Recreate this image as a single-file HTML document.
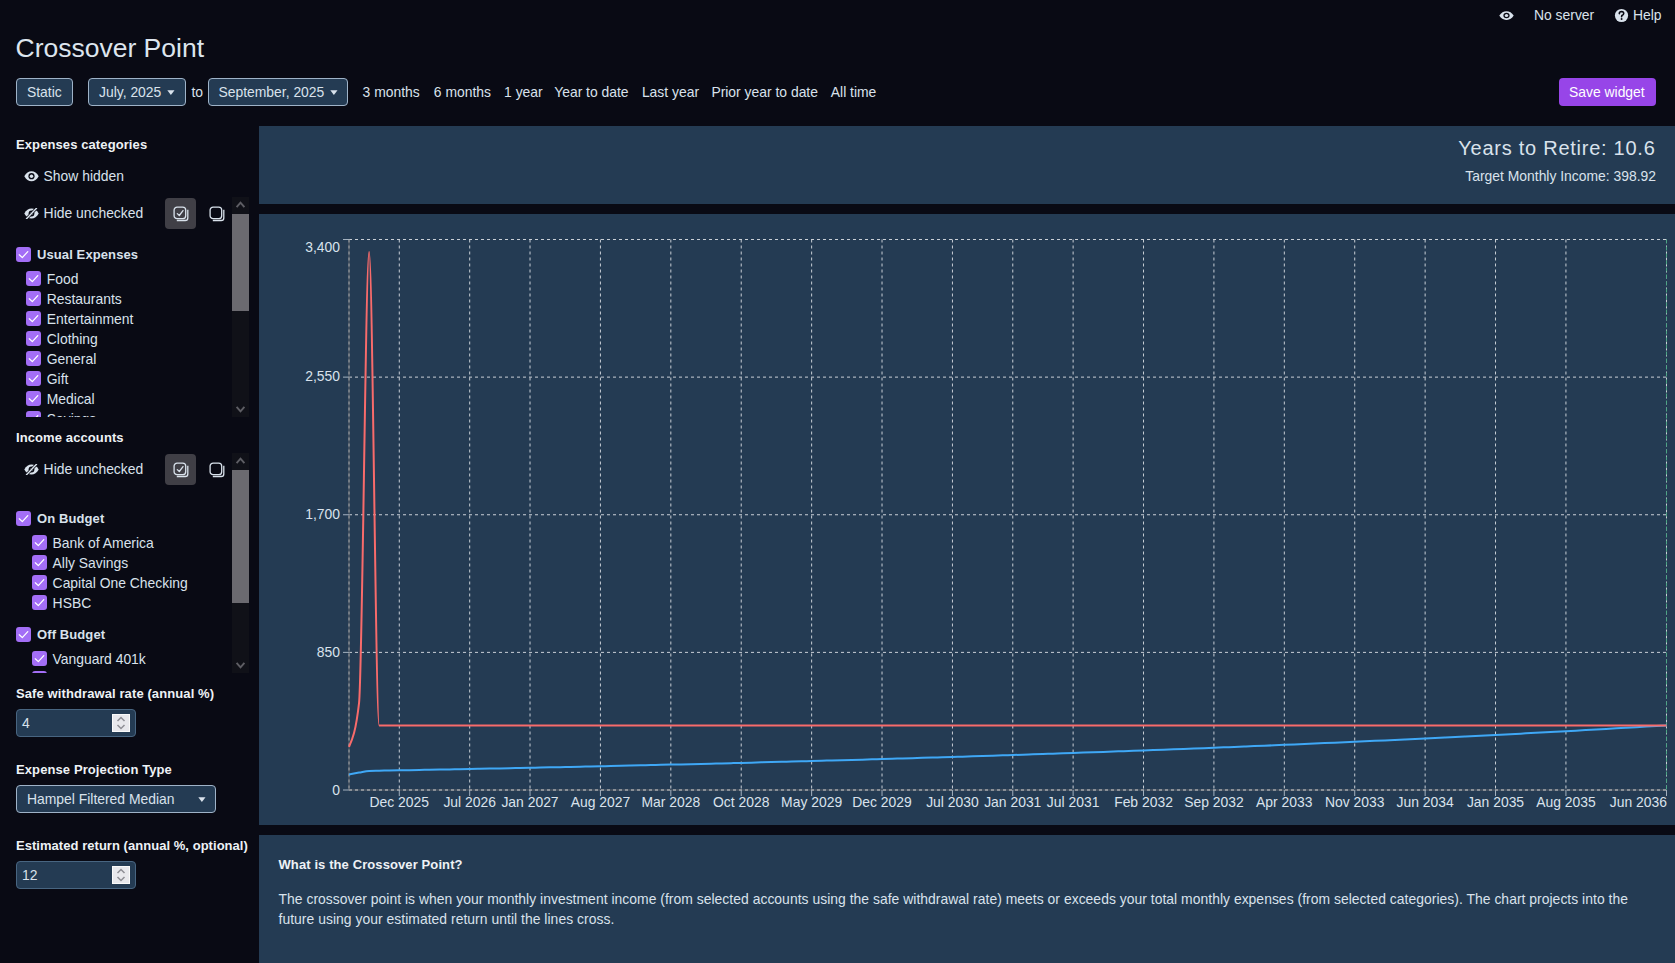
<!DOCTYPE html>
<html><head><meta charset="utf-8"><title>Crossover Point</title>
<style>
html,body{margin:0;padding:0;}
body{width:1675px;height:963px;overflow:hidden;position:relative;background:#090a14;font-family:"Liberation Sans",sans-serif;color:#d9e2ec;}
.t{position:absolute;white-space:nowrap;}
svg{display:block;}
</style></head><body>
<div style="position:absolute;left:259px;top:126px;width:1416px;height:78px;background:#243b53"></div>
<div style="position:absolute;left:259px;top:214px;width:1416px;height:611px;background:#243b53"></div>
<div style="position:absolute;left:259px;top:835px;width:1416px;height:128px;background:#243b53"></div>
<svg style="position:absolute;left:1499px;top:10.8px" width="15" height="9.2" viewBox="0 0 15 10.4" preserveAspectRatio="none"><path d="M0.3 5.2 C2.2 1.6 4.6 0.2 7.5 0.2 C10.4 0.2 12.8 1.6 14.7 5.2 C12.8 8.8 10.4 10.2 7.5 10.2 C4.6 10.2 2.2 8.8 0.3 5.2Z" fill="#d9e2ec"/><circle cx="7.5" cy="5.2" r="3.1" fill="#090a14"/><circle cx="7.5" cy="5.2" r="1.7" fill="#d9e2ec"/></svg>
<div class="t" style="left:1534.00px;top:5.40px;font-size:13.9px;line-height:20px;color:#d9e2ec;">No server</div>
<svg style="position:absolute;left:1614px;top:8px" width="15" height="15" viewBox="0 0 15 15">
<circle cx="7.5" cy="7.5" r="6.6" fill="#d9e2ec"/>
<path d="M5.3 5.6 Q5.4 3.5 7.6 3.5 Q9.8 3.6 9.7 5.5 Q9.6 6.8 8.3 7.3 Q7.6 7.7 7.6 8.7" fill="none" stroke="#090a14" stroke-width="1.6" stroke-linecap="round"/>
<circle cx="7.6" cy="11" r="0.95" fill="#090a14"/></svg>
<div class="t" style="left:1633.00px;top:5.40px;font-size:13.9px;line-height:20px;color:#d9e2ec;">Help</div>
<div class="t" style="left:15.50px;top:28.40px;font-size:26.5px;line-height:40px;color:#dde5ee;">Crossover Point</div>
<div style="position:absolute;left:16px;top:78px;width:57px;height:28px;background:#243b53;border:1px solid #9fb3c8;border-radius:4px;box-sizing:border-box;"></div>
<div class="t" style="left:27.00px;top:81.80px;font-size:13.9px;line-height:20px;color:#d9e2ec;">Static</div>
<div style="position:absolute;left:88px;top:78px;width:98px;height:28px;background:#243b53;border:1px solid #9fb3c8;border-radius:4px;box-sizing:border-box;"></div>
<div class="t" style="left:99.00px;top:81.80px;font-size:13.9px;line-height:20px;color:#d9e2ec;">July, 2025</div>
<svg style="position:absolute;left:167px;top:90px" width="8" height="6" viewBox="0 0 8 6"><path d="M0.3 0.3 L7.5 0.3 L3.9 4.9Z" fill="#d9e2ec"/></svg>
<div class="t" style="left:191.50px;top:81.80px;font-size:13.9px;line-height:20px;color:#d9e2ec;">to</div>
<div style="position:absolute;left:208px;top:78px;width:140px;height:28px;background:#243b53;border:1px solid #9fb3c8;border-radius:4px;box-sizing:border-box;"></div>
<div class="t" style="left:218.50px;top:81.80px;font-size:13.9px;line-height:20px;color:#d9e2ec;">September, 2025</div>
<svg style="position:absolute;left:330px;top:90px" width="8" height="6" viewBox="0 0 8 6"><path d="M0.3 0.3 L7.5 0.3 L3.9 4.9Z" fill="#d9e2ec"/></svg>
<div class="t" style="left:362.60px;top:81.80px;font-size:13.9px;line-height:20px;color:#d9e2ec;">3 months</div>
<div class="t" style="left:433.80px;top:81.80px;font-size:13.9px;line-height:20px;color:#d9e2ec;">6 months</div>
<div class="t" style="left:504.10px;top:81.80px;font-size:13.9px;line-height:20px;color:#d9e2ec;">1 year</div>
<div class="t" style="left:554.20px;top:81.80px;font-size:13.9px;line-height:20px;color:#d9e2ec;">Year to date</div>
<div class="t" style="left:641.90px;top:81.80px;font-size:13.9px;line-height:20px;color:#d9e2ec;">Last year</div>
<div class="t" style="left:711.40px;top:81.80px;font-size:13.9px;line-height:20px;color:#d9e2ec;">Prior year to date</div>
<div class="t" style="left:830.80px;top:81.80px;font-size:13.9px;line-height:20px;color:#d9e2ec;">All time</div>
<div style="position:absolute;left:1559px;top:78px;width:97px;height:28px;background:#9745e8;border-radius:4px"></div>
<div class="t" style="left:1569.00px;top:81.60px;font-size:13.9px;line-height:20px;color:#ffffff;">Save widget</div>
<div class="t" style="left:16.00px;top:134.90px;font-size:13px;line-height:20px;font-weight:700;letter-spacing:0.1px;color:#eef2f6;">Expenses categories</div>
<svg style="position:absolute;left:24px;top:171px" width="15" height="11" viewBox="0 0 15 11"><path d="M0.3 5.2 C2.2 1.6 4.6 0.2 7.5 0.2 C10.4 0.2 12.8 1.6 14.7 5.2 C12.8 8.8 10.4 10.2 7.5 10.2 C4.6 10.2 2.2 8.8 0.3 5.2Z" fill="#d9e2ec"/><circle cx="7.5" cy="5.2" r="3.1" fill="#090a14"/><circle cx="7.5" cy="5.2" r="1.7" fill="#d9e2ec"/></svg>
<div class="t" style="left:43.60px;top:165.90px;font-size:13.9px;line-height:20px;color:#d9e2ec;">Show hidden</div>
<svg style="position:absolute;left:24px;top:208px" width="15" height="11" viewBox="0 0 15 11"><path d="M0.3 5.5 C2.2 1.9 4.6 0.5 7.5 0.5 C10.4 0.5 12.8 1.9 14.7 5.5 C12.8 9.1 10.4 10.5 7.5 10.5 C4.6 10.5 2.2 9.1 0.3 5.5Z" fill="#d9e2ec"/><circle cx="7.5" cy="5.5" r="2.9" fill="#090a14"/><circle cx="7.5" cy="5.5" r="1.5" fill="#d9e2ec"/><path d="M2.5 10.8 L12.5 0.2" stroke="#090a14" stroke-width="2.8"/><path d="M2.5 10.8 L12.5 0.2" stroke="#d9e2ec" stroke-width="1.4" stroke-linecap="round"/></svg>
<div class="t" style="left:43.60px;top:203.20px;font-size:13.9px;line-height:20px;color:#d9e2ec;">Hide unchecked</div>
<div style="position:absolute;left:165px;top:198px;width:31px;height:31px;background:#403f46;border-radius:4px"></div>
<svg style="position:absolute;left:172.5px;top:205.5px" width="17" height="17" viewBox="0 0 17 17"><rect x="1.1" y="1.1" width="11.6" height="11.6" rx="3" fill="none" stroke="#d9e2ec" stroke-width="1.3"/><path d="M14.8 3.8 V11.9 Q14.8 14.5 12.2 14.5 H3.8" fill="none" stroke="#d9e2ec" stroke-width="1.3"/><path d="M4.3 7.6 L6.3 9.5 L10 4.6" fill="none" stroke="#d9e2ec" stroke-width="1.3" stroke-linecap="round" stroke-linejoin="round"/></svg>
<svg style="position:absolute;left:208.5px;top:205.5px" width="17" height="17" viewBox="0 0 17 17"><rect x="1.1" y="1.1" width="11.6" height="11.6" rx="3" fill="none" stroke="#d9e2ec" stroke-width="1.3"/><path d="M14.8 3.8 V11.9 Q14.8 14.5 12.2 14.5 H3.8" fill="none" stroke="#d9e2ec" stroke-width="1.3"/></svg>
<div style="position:absolute;left:232px;top:197px;width:17px;height:220px;background:#101118"></div>
<div style="position:absolute;left:232px;top:214px;width:17px;height:97px;background:#6b6a70"></div>
<svg style="position:absolute;left:232px;top:197px" width="17" height="16" viewBox="0 0 17 16"><path d="M4.6 10.2 L8.5 5.6 L12.4 10.2" fill="none" stroke="#5e5e64" stroke-width="1.9"/></svg>
<svg style="position:absolute;left:232px;top:401px" width="17" height="16" viewBox="0 0 17 16"><path d="M4.6 5.8 L8.5 10.4 L12.4 5.8" fill="none" stroke="#5e5e64" stroke-width="1.9"/></svg>
<div style="position:absolute;left:0;top:240px;width:232px;height:177px;overflow:hidden">
<svg style="position:absolute;left:16px;top:7px" width="15" height="15" viewBox="0 0 15 15"><rect width="15" height="15" rx="3" fill="#a36ef6"/><path d="M3.3 7.8 L6.3 10.6 L11.8 4.6" fill="none" stroke="#fff" stroke-width="1.25" stroke-linecap="round" stroke-linejoin="round"/></svg>
<div class="t" style="left:37.00px;top:5.10px;font-size:13px;line-height:20px;font-weight:700;letter-spacing:0.1px;color:#d9e2ec;">Usual Expenses</div>
<svg style="position:absolute;left:26px;top:31px" width="15" height="15" viewBox="0 0 15 15"><rect width="15" height="15" rx="3" fill="#a36ef6"/><path d="M3.3 7.8 L6.3 10.6 L11.8 4.6" fill="none" stroke="#fff" stroke-width="1.25" stroke-linecap="round" stroke-linejoin="round"/></svg>
<div class="t" style="left:46.80px;top:28.80px;font-size:13.9px;line-height:20px;color:#d9e2ec;">Food</div>
<svg style="position:absolute;left:26px;top:51px" width="15" height="15" viewBox="0 0 15 15"><rect width="15" height="15" rx="3" fill="#a36ef6"/><path d="M3.3 7.8 L6.3 10.6 L11.8 4.6" fill="none" stroke="#fff" stroke-width="1.25" stroke-linecap="round" stroke-linejoin="round"/></svg>
<div class="t" style="left:46.80px;top:48.80px;font-size:13.9px;line-height:20px;color:#d9e2ec;">Restaurants</div>
<svg style="position:absolute;left:26px;top:71px" width="15" height="15" viewBox="0 0 15 15"><rect width="15" height="15" rx="3" fill="#a36ef6"/><path d="M3.3 7.8 L6.3 10.6 L11.8 4.6" fill="none" stroke="#fff" stroke-width="1.25" stroke-linecap="round" stroke-linejoin="round"/></svg>
<div class="t" style="left:46.80px;top:68.80px;font-size:13.9px;line-height:20px;color:#d9e2ec;">Entertainment</div>
<svg style="position:absolute;left:26px;top:91px" width="15" height="15" viewBox="0 0 15 15"><rect width="15" height="15" rx="3" fill="#a36ef6"/><path d="M3.3 7.8 L6.3 10.6 L11.8 4.6" fill="none" stroke="#fff" stroke-width="1.25" stroke-linecap="round" stroke-linejoin="round"/></svg>
<div class="t" style="left:46.80px;top:88.80px;font-size:13.9px;line-height:20px;color:#d9e2ec;">Clothing</div>
<svg style="position:absolute;left:26px;top:111px" width="15" height="15" viewBox="0 0 15 15"><rect width="15" height="15" rx="3" fill="#a36ef6"/><path d="M3.3 7.8 L6.3 10.6 L11.8 4.6" fill="none" stroke="#fff" stroke-width="1.25" stroke-linecap="round" stroke-linejoin="round"/></svg>
<div class="t" style="left:46.80px;top:108.80px;font-size:13.9px;line-height:20px;color:#d9e2ec;">General</div>
<svg style="position:absolute;left:26px;top:131px" width="15" height="15" viewBox="0 0 15 15"><rect width="15" height="15" rx="3" fill="#a36ef6"/><path d="M3.3 7.8 L6.3 10.6 L11.8 4.6" fill="none" stroke="#fff" stroke-width="1.25" stroke-linecap="round" stroke-linejoin="round"/></svg>
<div class="t" style="left:46.80px;top:128.80px;font-size:13.9px;line-height:20px;color:#d9e2ec;">Gift</div>
<svg style="position:absolute;left:26px;top:151px" width="15" height="15" viewBox="0 0 15 15"><rect width="15" height="15" rx="3" fill="#a36ef6"/><path d="M3.3 7.8 L6.3 10.6 L11.8 4.6" fill="none" stroke="#fff" stroke-width="1.25" stroke-linecap="round" stroke-linejoin="round"/></svg>
<div class="t" style="left:46.80px;top:148.80px;font-size:13.9px;line-height:20px;color:#d9e2ec;">Medical</div>
<svg style="position:absolute;left:26px;top:171px" width="15" height="15" viewBox="0 0 15 15"><rect width="15" height="15" rx="3" fill="#a36ef6"/><path d="M3.3 7.8 L6.3 10.6 L11.8 4.6" fill="none" stroke="#fff" stroke-width="1.25" stroke-linecap="round" stroke-linejoin="round"/></svg>
<div class="t" style="left:46.80px;top:168.80px;font-size:13.9px;line-height:20px;color:#d9e2ec;">Savings</div>
</div>
<div class="t" style="left:16.00px;top:427.70px;font-size:13px;line-height:20px;font-weight:700;letter-spacing:0.1px;color:#eef2f6;">Income accounts</div>
<svg style="position:absolute;left:24px;top:464px" width="15" height="11" viewBox="0 0 15 11"><path d="M0.3 5.5 C2.2 1.9 4.6 0.5 7.5 0.5 C10.4 0.5 12.8 1.9 14.7 5.5 C12.8 9.1 10.4 10.5 7.5 10.5 C4.6 10.5 2.2 9.1 0.3 5.5Z" fill="#d9e2ec"/><circle cx="7.5" cy="5.5" r="2.9" fill="#090a14"/><circle cx="7.5" cy="5.5" r="1.5" fill="#d9e2ec"/><path d="M2.5 10.8 L12.5 0.2" stroke="#090a14" stroke-width="2.8"/><path d="M2.5 10.8 L12.5 0.2" stroke="#d9e2ec" stroke-width="1.4" stroke-linecap="round"/></svg>
<div class="t" style="left:43.60px;top:458.80px;font-size:13.9px;line-height:20px;color:#d9e2ec;">Hide unchecked</div>
<div style="position:absolute;left:165px;top:454px;width:31px;height:31px;background:#403f46;border-radius:4px"></div>
<svg style="position:absolute;left:172.5px;top:461.5px" width="17" height="17" viewBox="0 0 17 17"><rect x="1.1" y="1.1" width="11.6" height="11.6" rx="3" fill="none" stroke="#d9e2ec" stroke-width="1.3"/><path d="M14.8 3.8 V11.9 Q14.8 14.5 12.2 14.5 H3.8" fill="none" stroke="#d9e2ec" stroke-width="1.3"/><path d="M4.3 7.6 L6.3 9.5 L10 4.6" fill="none" stroke="#d9e2ec" stroke-width="1.3" stroke-linecap="round" stroke-linejoin="round"/></svg>
<svg style="position:absolute;left:208.5px;top:461.5px" width="17" height="17" viewBox="0 0 17 17"><rect x="1.1" y="1.1" width="11.6" height="11.6" rx="3" fill="none" stroke="#d9e2ec" stroke-width="1.3"/><path d="M14.8 3.8 V11.9 Q14.8 14.5 12.2 14.5 H3.8" fill="none" stroke="#d9e2ec" stroke-width="1.3"/></svg>
<div style="position:absolute;left:232px;top:453px;width:17px;height:220px;background:#101118"></div>
<div style="position:absolute;left:232px;top:470px;width:17px;height:133px;background:#6b6a70"></div>
<svg style="position:absolute;left:232px;top:453px" width="17" height="16" viewBox="0 0 17 16"><path d="M4.6 10.2 L8.5 5.6 L12.4 10.2" fill="none" stroke="#5e5e64" stroke-width="1.9"/></svg>
<svg style="position:absolute;left:232px;top:657px" width="17" height="16" viewBox="0 0 17 16"><path d="M4.6 5.8 L8.5 10.4 L12.4 5.8" fill="none" stroke="#5e5e64" stroke-width="1.9"/></svg>
<div style="position:absolute;left:0;top:495px;width:232px;height:178px;overflow:hidden">
<svg style="position:absolute;left:16px;top:16px" width="15" height="15" viewBox="0 0 15 15"><rect width="15" height="15" rx="3" fill="#a36ef6"/><path d="M3.3 7.8 L6.3 10.6 L11.8 4.6" fill="none" stroke="#fff" stroke-width="1.25" stroke-linecap="round" stroke-linejoin="round"/></svg>
<div class="t" style="left:37.00px;top:14.00px;font-size:13px;line-height:20px;font-weight:700;letter-spacing:0.1px;color:#d9e2ec;">On Budget</div>
<svg style="position:absolute;left:32px;top:40px" width="15" height="15" viewBox="0 0 15 15"><rect width="15" height="15" rx="3" fill="#a36ef6"/><path d="M3.3 7.8 L6.3 10.6 L11.8 4.6" fill="none" stroke="#fff" stroke-width="1.25" stroke-linecap="round" stroke-linejoin="round"/></svg>
<div class="t" style="left:52.60px;top:37.60px;font-size:13.9px;line-height:20px;color:#d9e2ec;">Bank of America</div>
<svg style="position:absolute;left:32px;top:60px" width="15" height="15" viewBox="0 0 15 15"><rect width="15" height="15" rx="3" fill="#a36ef6"/><path d="M3.3 7.8 L6.3 10.6 L11.8 4.6" fill="none" stroke="#fff" stroke-width="1.25" stroke-linecap="round" stroke-linejoin="round"/></svg>
<div class="t" style="left:52.60px;top:57.60px;font-size:13.9px;line-height:20px;color:#d9e2ec;">Ally Savings</div>
<svg style="position:absolute;left:32px;top:80px" width="15" height="15" viewBox="0 0 15 15"><rect width="15" height="15" rx="3" fill="#a36ef6"/><path d="M3.3 7.8 L6.3 10.6 L11.8 4.6" fill="none" stroke="#fff" stroke-width="1.25" stroke-linecap="round" stroke-linejoin="round"/></svg>
<div class="t" style="left:52.60px;top:77.60px;font-size:13.9px;line-height:20px;color:#d9e2ec;">Capital One Checking</div>
<svg style="position:absolute;left:32px;top:100px" width="15" height="15" viewBox="0 0 15 15"><rect width="15" height="15" rx="3" fill="#a36ef6"/><path d="M3.3 7.8 L6.3 10.6 L11.8 4.6" fill="none" stroke="#fff" stroke-width="1.25" stroke-linecap="round" stroke-linejoin="round"/></svg>
<div class="t" style="left:52.60px;top:97.60px;font-size:13.9px;line-height:20px;color:#d9e2ec;">HSBC</div>
<svg style="position:absolute;left:16px;top:132px" width="15" height="15" viewBox="0 0 15 15"><rect width="15" height="15" rx="3" fill="#a36ef6"/><path d="M3.3 7.8 L6.3 10.6 L11.8 4.6" fill="none" stroke="#fff" stroke-width="1.25" stroke-linecap="round" stroke-linejoin="round"/></svg>
<div class="t" style="left:37.00px;top:130.10px;font-size:13px;line-height:20px;font-weight:700;letter-spacing:0.1px;color:#d9e2ec;">Off Budget</div>
<svg style="position:absolute;left:32px;top:156px" width="15" height="15" viewBox="0 0 15 15"><rect width="15" height="15" rx="3" fill="#a36ef6"/><path d="M3.3 7.8 L6.3 10.6 L11.8 4.6" fill="none" stroke="#fff" stroke-width="1.25" stroke-linecap="round" stroke-linejoin="round"/></svg>
<div class="t" style="left:52.60px;top:153.70px;font-size:13.9px;line-height:20px;color:#d9e2ec;">Vanguard 401k</div>
<svg style="position:absolute;left:32px;top:176px" width="15" height="15" viewBox="0 0 15 15"><rect width="15" height="15" rx="3" fill="#a36ef6"/><path d="M3.3 7.8 L6.3 10.6 L11.8 4.6" fill="none" stroke="#fff" stroke-width="1.25" stroke-linecap="round" stroke-linejoin="round"/></svg>
</div>
<div class="t" style="left:16.00px;top:683.70px;font-size:13px;line-height:20px;font-weight:700;letter-spacing:0.1px;color:#eef2f6;">Safe withdrawal rate (annual %)</div>
<div style="position:absolute;left:16px;top:709px;width:120px;height:28px;background:#243b53;border:1px solid #486581;border-radius:4px;box-sizing:border-box;"></div>
<div class="t" style="left:22.00px;top:712.70px;font-size:13.9px;line-height:20px;color:#d9e2ec;">4</div>
<svg style="position:absolute;left:112px;top:714px" width="18" height="18" viewBox="0 0 18 18"><rect x="0.5" y="0.5" width="17" height="17" fill="#e8e8ec" stroke="#fafafa"/><path d="M5.5 7 L9 3.5 L12.5 7" fill="none" stroke="#8e8e95" stroke-width="1.5"/><path d="M5.5 11 L9 14.5 L12.5 11" fill="none" stroke="#8e8e95" stroke-width="1.5"/></svg>
<div class="t" style="left:16.00px;top:759.90px;font-size:13px;line-height:20px;font-weight:700;letter-spacing:0.1px;color:#eef2f6;">Expense Projection Type</div>
<div style="position:absolute;left:16px;top:785px;width:200px;height:28px;background:#243b53;border:1px solid #9fb3c8;border-radius:4px;box-sizing:border-box;"></div>
<div class="t" style="left:27.00px;top:788.60px;font-size:13.9px;line-height:20px;color:#d9e2ec;">Hampel Filtered Median</div>
<svg style="position:absolute;left:197.6px;top:797px" width="8" height="6" viewBox="0 0 8 6"><path d="M0.3 0.3 L7.5 0.3 L3.9 4.9Z" fill="#d9e2ec"/></svg>
<div class="t" style="left:16.00px;top:835.50px;font-size:13px;line-height:20px;font-weight:700;letter-spacing:0.1px;color:#eef2f6;letter-spacing:0.04px;">Estimated return (annual %, optional)</div>
<div style="position:absolute;left:16px;top:861px;width:120px;height:28px;background:#243b53;border:1px solid #486581;border-radius:4px;box-sizing:border-box;"></div>
<div class="t" style="left:22.00px;top:864.70px;font-size:13.9px;line-height:20px;color:#d9e2ec;">12</div>
<svg style="position:absolute;left:112px;top:866px" width="18" height="18" viewBox="0 0 18 18"><rect x="0.5" y="0.5" width="17" height="17" fill="#e8e8ec" stroke="#fafafa"/><path d="M5.5 7 L9 3.5 L12.5 7" fill="none" stroke="#8e8e95" stroke-width="1.5"/><path d="M5.5 11 L9 14.5 L12.5 11" fill="none" stroke="#8e8e95" stroke-width="1.5"/></svg>
<div class="t" style="right:19.50px;top:132.70px;font-size:20px;line-height:30px;color:#d9e2ec;letter-spacing:0.74px;">Years to Retire: 10.6</div>
<div class="t" style="right:19.00px;top:166.00px;font-size:13.9px;line-height:20px;color:#d9e2ec;">Target Monthly Income: 398.92</div>
<svg style="position:absolute;left:0;top:0" width="1675" height="963" viewBox="0 0 1675 963">
<line x1="349" y1="239.50" x2="1666.5" y2="239.50" stroke="#c9cfd6" stroke-dasharray="3 3"/>
<line x1="349" y1="377.12" x2="1666.5" y2="377.12" stroke="#c9cfd6" stroke-dasharray="3 3"/>
<line x1="349" y1="514.75" x2="1666.5" y2="514.75" stroke="#c9cfd6" stroke-dasharray="3 3"/>
<line x1="349" y1="652.38" x2="1666.5" y2="652.38" stroke="#c9cfd6" stroke-dasharray="3 3"/>
<line x1="349" y1="790.00" x2="1666.5" y2="790.00" stroke="#c9cfd6" stroke-dasharray="3 3"/>
<line x1="349" y1="239.5" x2="349" y2="790" stroke="#5f656d" />
<line x1="349" y1="239.5" x2="349" y2="790" stroke="#a9abad" stroke-dasharray="3 3"/>
<line x1="399.29" y1="239.5" x2="399.29" y2="790" stroke="#c9cfd6" stroke-dasharray="3 3"/>
<line x1="469.69" y1="239.5" x2="469.69" y2="790" stroke="#c9cfd6" stroke-dasharray="3 3"/>
<line x1="530.03" y1="239.5" x2="530.03" y2="790" stroke="#c9cfd6" stroke-dasharray="3 3"/>
<line x1="600.43" y1="239.5" x2="600.43" y2="790" stroke="#c9cfd6" stroke-dasharray="3 3"/>
<line x1="670.83" y1="239.5" x2="670.83" y2="790" stroke="#c9cfd6" stroke-dasharray="3 3"/>
<line x1="741.23" y1="239.5" x2="741.23" y2="790" stroke="#c9cfd6" stroke-dasharray="3 3"/>
<line x1="811.63" y1="239.5" x2="811.63" y2="790" stroke="#c9cfd6" stroke-dasharray="3 3"/>
<line x1="882.03" y1="239.5" x2="882.03" y2="790" stroke="#c9cfd6" stroke-dasharray="3 3"/>
<line x1="952.44" y1="239.5" x2="952.44" y2="790" stroke="#c9cfd6" stroke-dasharray="3 3"/>
<line x1="1012.78" y1="239.5" x2="1012.78" y2="790" stroke="#c9cfd6" stroke-dasharray="3 3"/>
<line x1="1073.12" y1="239.5" x2="1073.12" y2="790" stroke="#c9cfd6" stroke-dasharray="3 3"/>
<line x1="1143.52" y1="239.5" x2="1143.52" y2="790" stroke="#c9cfd6" stroke-dasharray="3 3"/>
<line x1="1213.92" y1="239.5" x2="1213.92" y2="790" stroke="#c9cfd6" stroke-dasharray="3 3"/>
<line x1="1284.32" y1="239.5" x2="1284.32" y2="790" stroke="#c9cfd6" stroke-dasharray="3 3"/>
<line x1="1354.73" y1="239.5" x2="1354.73" y2="790" stroke="#c9cfd6" stroke-dasharray="3 3"/>
<line x1="1425.13" y1="239.5" x2="1425.13" y2="790" stroke="#c9cfd6" stroke-dasharray="3 3"/>
<line x1="1495.53" y1="239.5" x2="1495.53" y2="790" stroke="#c9cfd6" stroke-dasharray="3 3"/>
<line x1="1565.93" y1="239.5" x2="1565.93" y2="790" stroke="#c9cfd6" stroke-dasharray="3 3"/>
<line x1="1666.50" y1="239.5" x2="1666.50" y2="790" stroke="#c9cfd6" stroke-dasharray="3 3"/>
<line x1="349" y1="790" x2="1666.5" y2="790" stroke="#5f656d"/>
<line x1="349" y1="790" x2="1666.5" y2="790" stroke="#a9abad" stroke-dasharray="3 3"/>
<line x1="399.29" y1="790" x2="399.29" y2="796" stroke="#a3b1bf"/>
<line x1="469.69" y1="790" x2="469.69" y2="796" stroke="#a3b1bf"/>
<line x1="530.03" y1="790" x2="530.03" y2="796" stroke="#a3b1bf"/>
<line x1="600.43" y1="790" x2="600.43" y2="796" stroke="#a3b1bf"/>
<line x1="670.83" y1="790" x2="670.83" y2="796" stroke="#a3b1bf"/>
<line x1="741.23" y1="790" x2="741.23" y2="796" stroke="#a3b1bf"/>
<line x1="811.63" y1="790" x2="811.63" y2="796" stroke="#a3b1bf"/>
<line x1="882.03" y1="790" x2="882.03" y2="796" stroke="#a3b1bf"/>
<line x1="952.44" y1="790" x2="952.44" y2="796" stroke="#a3b1bf"/>
<line x1="1012.78" y1="790" x2="1012.78" y2="796" stroke="#a3b1bf"/>
<line x1="1073.12" y1="790" x2="1073.12" y2="796" stroke="#a3b1bf"/>
<line x1="1143.52" y1="790" x2="1143.52" y2="796" stroke="#a3b1bf"/>
<line x1="1213.92" y1="790" x2="1213.92" y2="796" stroke="#a3b1bf"/>
<line x1="1284.32" y1="790" x2="1284.32" y2="796" stroke="#a3b1bf"/>
<line x1="1354.73" y1="790" x2="1354.73" y2="796" stroke="#a3b1bf"/>
<line x1="1425.13" y1="790" x2="1425.13" y2="796" stroke="#a3b1bf"/>
<line x1="1495.53" y1="790" x2="1495.53" y2="796" stroke="#a3b1bf"/>
<line x1="1565.93" y1="790" x2="1565.93" y2="796" stroke="#a3b1bf"/>
<line x1="1666.50" y1="790" x2="1666.50" y2="796" stroke="#a3b1bf"/>
<line x1="343" y1="239.50" x2="349" y2="239.50" stroke="#a3b1bf"/>
<line x1="343" y1="377.12" x2="349" y2="377.12" stroke="#a3b1bf"/>
<line x1="343" y1="514.75" x2="349" y2="514.75" stroke="#a3b1bf"/>
<line x1="343" y1="652.38" x2="349" y2="652.38" stroke="#a3b1bf"/>
<line x1="343" y1="790.00" x2="349" y2="790.00" stroke="#a3b1bf"/>
<line x1="1666.5" y1="239.5" x2="1666.5" y2="790" stroke="#4da585" stroke-dasharray="4 3"/>
<path d="M349.00,774.41C352.35,773.79,355.70,773.18,359.06,772.59C362.41,772.01,365.76,771.01,369.11,770.88C372.47,770.76,375.82,770.76,379.17,770.70C382.52,770.64,385.88,770.58,389.23,770.52C392.58,770.46,395.93,770.40,399.29,770.34C402.64,770.27,405.99,770.21,409.34,770.15C412.70,770.09,416.05,770.02,419.40,769.96C422.75,769.90,426.11,769.83,429.46,769.77C432.81,769.71,436.16,769.64,439.52,769.58C442.87,769.51,446.22,769.45,449.57,769.38C452.92,769.32,456.28,769.25,459.63,769.19C462.98,769.12,466.33,769.06,469.69,768.99C473.04,768.93,476.39,768.86,479.74,768.79C483.10,768.73,486.45,768.66,489.80,768.59C493.15,768.52,496.51,768.46,499.86,768.39C503.21,768.32,506.56,768.25,509.92,768.18C513.27,768.11,516.62,768.05,519.97,767.98C523.33,767.91,526.68,767.84,530.03,767.77C533.38,767.70,536.74,767.63,540.09,767.56C543.44,767.49,546.79,767.41,550.15,767.34C553.50,767.27,556.85,767.20,560.20,767.13C563.55,767.06,566.91,766.98,570.26,766.91C573.61,766.84,576.96,766.77,580.32,766.69C583.67,766.62,587.02,766.54,590.37,766.47C593.73,766.40,597.08,766.32,600.43,766.25C603.78,766.17,607.14,766.10,610.49,766.02C613.84,765.95,617.19,765.87,620.55,765.79C623.90,765.72,627.25,765.64,630.60,765.56C633.96,765.49,637.31,765.41,640.66,765.33C644.01,765.26,647.37,765.18,650.72,765.10C654.07,765.02,657.42,764.94,660.77,764.86C664.13,764.78,667.48,764.70,670.83,764.62C674.18,764.54,677.54,764.46,680.89,764.38C684.24,764.30,687.59,764.22,690.95,764.14C694.30,764.06,697.65,763.98,701.00,763.89C704.36,763.81,707.71,763.73,711.06,763.65C714.41,763.56,717.77,763.48,721.12,763.40C724.47,763.31,727.82,763.23,731.18,763.14C734.53,763.06,737.88,762.98,741.23,762.89C744.59,762.80,747.94,762.72,751.29,762.63C754.64,762.55,757.99,762.46,761.35,762.37C764.70,762.29,768.05,762.20,771.40,762.11C774.76,762.02,778.11,761.93,781.46,761.85C784.81,761.76,788.17,761.67,791.52,761.58C794.87,761.49,798.22,761.40,801.58,761.31C804.93,761.22,808.28,761.13,811.63,761.04C814.99,760.95,818.34,760.85,821.69,760.76C825.04,760.67,828.40,760.58,831.75,760.48C835.10,760.39,838.45,760.30,841.81,760.20C845.16,760.11,848.51,760.02,851.86,759.92C855.22,759.83,858.57,759.73,861.92,759.64C865.27,759.54,868.62,759.45,871.98,759.35C875.33,759.25,878.68,759.16,882.03,759.06C885.39,758.96,888.74,758.86,892.09,758.76C895.44,758.67,898.80,758.57,902.15,758.47C905.50,758.37,908.85,758.27,912.21,758.17C915.56,758.07,918.91,757.97,922.26,757.87C925.62,757.77,928.97,757.66,932.32,757.56C935.67,757.46,939.03,757.36,942.38,757.25C945.73,757.15,949.08,757.05,952.44,756.94C955.79,756.84,959.14,756.73,962.49,756.63C965.84,756.52,969.20,756.42,972.55,756.31C975.90,756.21,979.25,756.10,982.61,755.99C985.96,755.89,989.31,755.78,992.66,755.67C996.02,755.56,999.37,755.45,1002.72,755.34C1006.07,755.24,1009.43,755.13,1012.78,755.02C1016.13,754.91,1019.48,754.80,1022.84,754.68C1026.19,754.57,1029.54,754.46,1032.89,754.35C1036.25,754.24,1039.60,754.12,1042.95,754.01C1046.30,753.90,1049.66,753.78,1053.01,753.67C1056.36,753.55,1059.71,753.44,1063.06,753.32C1066.42,753.21,1069.77,753.09,1073.12,752.98C1076.47,752.86,1079.83,752.74,1083.18,752.62C1086.53,752.51,1089.88,752.39,1093.24,752.27C1096.59,752.15,1099.94,752.03,1103.29,751.91C1106.65,751.79,1110.00,751.67,1113.35,751.55C1116.70,751.43,1120.06,751.31,1123.41,751.19C1126.76,751.06,1130.11,750.94,1133.47,750.82C1136.82,750.69,1140.17,750.57,1143.52,750.45C1146.88,750.32,1150.23,750.20,1153.58,750.07C1156.93,749.94,1160.28,749.82,1163.64,749.69C1166.99,749.56,1170.34,749.44,1173.69,749.31C1177.05,749.18,1180.40,749.05,1183.75,748.92C1187.10,748.79,1190.46,748.66,1193.81,748.53C1197.16,748.40,1200.51,748.27,1203.87,748.14C1207.22,748.01,1210.57,747.88,1213.92,747.74C1217.28,747.61,1220.63,747.48,1223.98,747.34C1227.33,747.21,1230.69,747.07,1234.04,746.94C1237.39,746.80,1240.74,746.67,1244.10,746.53C1247.45,746.39,1250.80,746.25,1254.15,746.12C1257.51,745.98,1260.86,745.84,1264.21,745.70C1267.56,745.56,1270.91,745.42,1274.27,745.28C1277.62,745.14,1280.97,745.00,1284.32,744.85C1287.68,744.71,1291.03,744.57,1294.38,744.43C1297.73,744.28,1301.09,744.14,1304.44,743.99C1307.79,743.85,1311.14,743.70,1314.50,743.56C1317.85,743.41,1321.20,743.26,1324.55,743.12C1327.91,742.97,1331.26,742.82,1334.61,742.67C1337.96,742.52,1341.32,742.37,1344.67,742.22C1348.02,742.07,1351.37,741.92,1354.73,741.77C1358.08,741.62,1361.43,741.47,1364.78,741.31C1368.13,741.16,1371.49,741.00,1374.84,740.85C1378.19,740.70,1381.54,740.54,1384.90,740.38C1388.25,740.23,1391.60,740.07,1394.95,739.91C1398.31,739.75,1401.66,739.60,1405.01,739.44C1408.36,739.28,1411.72,739.12,1415.07,738.96C1418.42,738.80,1421.77,738.64,1425.13,738.47C1428.48,738.31,1431.83,738.15,1435.18,737.98C1438.54,737.82,1441.89,737.66,1445.24,737.49C1448.59,737.33,1451.95,737.16,1455.30,736.99C1458.65,736.83,1462.00,736.66,1465.35,736.49C1468.71,736.32,1472.06,736.15,1475.41,735.98C1478.76,735.81,1482.12,735.64,1485.47,735.47C1488.82,735.30,1492.17,735.13,1495.53,734.95C1498.88,734.78,1502.23,734.60,1505.58,734.43C1508.94,734.25,1512.29,734.08,1515.64,733.90C1518.99,733.73,1522.35,733.55,1525.70,733.37C1529.05,733.19,1532.40,733.01,1535.76,732.83C1539.11,732.65,1542.46,732.47,1545.81,732.29C1549.17,732.11,1552.52,731.93,1555.87,731.74C1559.22,731.56,1562.58,731.37,1565.93,731.19C1569.28,731.00,1572.63,730.82,1575.98,730.63C1579.34,730.44,1582.69,730.26,1586.04,730.07C1589.39,729.88,1592.75,729.69,1596.10,729.50C1599.45,729.31,1602.80,729.12,1606.16,728.93C1609.51,728.73,1612.86,728.54,1616.21,728.35C1619.57,728.15,1622.92,727.96,1626.27,727.76C1629.62,727.57,1632.98,727.37,1636.33,727.17C1639.68,726.97,1643.03,726.77,1646.39,726.57C1649.74,726.37,1653.09,726.17,1656.44,725.97C1659.80,725.77,1663.15,725.57,1666.50,725.36" fill="none" stroke="#3fa8f6" stroke-width="2"/>
<path d="M349.00,746.80C352.35,739.47,355.70,732.13,359.06,702.79C362.41,673.46,365.76,252.00,369.11,252.00C372.47,252.00,375.82,725.41,379.17,725.41C382.52,725.41,385.88,725.41,389.23,725.41C392.58,725.41,395.93,725.41,399.29,725.41C402.64,725.41,405.99,725.41,409.34,725.41C412.70,725.41,416.05,725.41,419.40,725.41C422.75,725.41,426.11,725.41,429.46,725.41C432.81,725.41,436.16,725.41,439.52,725.41C442.87,725.41,446.22,725.41,449.57,725.41C452.92,725.41,456.28,725.41,459.63,725.41C462.98,725.41,466.33,725.41,469.69,725.41C473.04,725.41,476.39,725.41,479.74,725.41C483.10,725.41,486.45,725.41,489.80,725.41C493.15,725.41,496.51,725.41,499.86,725.41C503.21,725.41,506.56,725.41,509.92,725.41C513.27,725.41,516.62,725.41,519.97,725.41C523.33,725.41,526.68,725.41,530.03,725.41C533.38,725.41,536.74,725.41,540.09,725.41C543.44,725.41,546.79,725.41,550.15,725.41C553.50,725.41,556.85,725.41,560.20,725.41C563.55,725.41,566.91,725.41,570.26,725.41C573.61,725.41,576.96,725.41,580.32,725.41C583.67,725.41,587.02,725.41,590.37,725.41C593.73,725.41,597.08,725.41,600.43,725.41C603.78,725.41,607.14,725.41,610.49,725.41C613.84,725.41,617.19,725.41,620.55,725.41C623.90,725.41,627.25,725.41,630.60,725.41C633.96,725.41,637.31,725.41,640.66,725.41C644.01,725.41,647.37,725.41,650.72,725.41C654.07,725.41,657.42,725.41,660.77,725.41C664.13,725.41,667.48,725.41,670.83,725.41C674.18,725.41,677.54,725.41,680.89,725.41C684.24,725.41,687.59,725.41,690.95,725.41C694.30,725.41,697.65,725.41,701.00,725.41C704.36,725.41,707.71,725.41,711.06,725.41C714.41,725.41,717.77,725.41,721.12,725.41C724.47,725.41,727.82,725.41,731.18,725.41C734.53,725.41,737.88,725.41,741.23,725.41C744.59,725.41,747.94,725.41,751.29,725.41C754.64,725.41,757.99,725.41,761.35,725.41C764.70,725.41,768.05,725.41,771.40,725.41C774.76,725.41,778.11,725.41,781.46,725.41C784.81,725.41,788.17,725.41,791.52,725.41C794.87,725.41,798.22,725.41,801.58,725.41C804.93,725.41,808.28,725.41,811.63,725.41C814.99,725.41,818.34,725.41,821.69,725.41C825.04,725.41,828.40,725.41,831.75,725.41C835.10,725.41,838.45,725.41,841.81,725.41C845.16,725.41,848.51,725.41,851.86,725.41C855.22,725.41,858.57,725.41,861.92,725.41C865.27,725.41,868.62,725.41,871.98,725.41C875.33,725.41,878.68,725.41,882.03,725.41C885.39,725.41,888.74,725.41,892.09,725.41C895.44,725.41,898.80,725.41,902.15,725.41C905.50,725.41,908.85,725.41,912.21,725.41C915.56,725.41,918.91,725.41,922.26,725.41C925.62,725.41,928.97,725.41,932.32,725.41C935.67,725.41,939.03,725.41,942.38,725.41C945.73,725.41,949.08,725.41,952.44,725.41C955.79,725.41,959.14,725.41,962.49,725.41C965.84,725.41,969.20,725.41,972.55,725.41C975.90,725.41,979.25,725.41,982.61,725.41C985.96,725.41,989.31,725.41,992.66,725.41C996.02,725.41,999.37,725.41,1002.72,725.41C1006.07,725.41,1009.43,725.41,1012.78,725.41C1016.13,725.41,1019.48,725.41,1022.84,725.41C1026.19,725.41,1029.54,725.41,1032.89,725.41C1036.25,725.41,1039.60,725.41,1042.95,725.41C1046.30,725.41,1049.66,725.41,1053.01,725.41C1056.36,725.41,1059.71,725.41,1063.06,725.41C1066.42,725.41,1069.77,725.41,1073.12,725.41C1076.47,725.41,1079.83,725.41,1083.18,725.41C1086.53,725.41,1089.88,725.41,1093.24,725.41C1096.59,725.41,1099.94,725.41,1103.29,725.41C1106.65,725.41,1110.00,725.41,1113.35,725.41C1116.70,725.41,1120.06,725.41,1123.41,725.41C1126.76,725.41,1130.11,725.41,1133.47,725.41C1136.82,725.41,1140.17,725.41,1143.52,725.41C1146.88,725.41,1150.23,725.41,1153.58,725.41C1156.93,725.41,1160.28,725.41,1163.64,725.41C1166.99,725.41,1170.34,725.41,1173.69,725.41C1177.05,725.41,1180.40,725.41,1183.75,725.41C1187.10,725.41,1190.46,725.41,1193.81,725.41C1197.16,725.41,1200.51,725.41,1203.87,725.41C1207.22,725.41,1210.57,725.41,1213.92,725.41C1217.28,725.41,1220.63,725.41,1223.98,725.41C1227.33,725.41,1230.69,725.41,1234.04,725.41C1237.39,725.41,1240.74,725.41,1244.10,725.41C1247.45,725.41,1250.80,725.41,1254.15,725.41C1257.51,725.41,1260.86,725.41,1264.21,725.41C1267.56,725.41,1270.91,725.41,1274.27,725.41C1277.62,725.41,1280.97,725.41,1284.32,725.41C1287.68,725.41,1291.03,725.41,1294.38,725.41C1297.73,725.41,1301.09,725.41,1304.44,725.41C1307.79,725.41,1311.14,725.41,1314.50,725.41C1317.85,725.41,1321.20,725.41,1324.55,725.41C1327.91,725.41,1331.26,725.41,1334.61,725.41C1337.96,725.41,1341.32,725.41,1344.67,725.41C1348.02,725.41,1351.37,725.41,1354.73,725.41C1358.08,725.41,1361.43,725.41,1364.78,725.41C1368.13,725.41,1371.49,725.41,1374.84,725.41C1378.19,725.41,1381.54,725.41,1384.90,725.41C1388.25,725.41,1391.60,725.41,1394.95,725.41C1398.31,725.41,1401.66,725.41,1405.01,725.41C1408.36,725.41,1411.72,725.41,1415.07,725.41C1418.42,725.41,1421.77,725.41,1425.13,725.41C1428.48,725.41,1431.83,725.41,1435.18,725.41C1438.54,725.41,1441.89,725.41,1445.24,725.41C1448.59,725.41,1451.95,725.41,1455.30,725.41C1458.65,725.41,1462.00,725.41,1465.35,725.41C1468.71,725.41,1472.06,725.41,1475.41,725.41C1478.76,725.41,1482.12,725.41,1485.47,725.41C1488.82,725.41,1492.17,725.41,1495.53,725.41C1498.88,725.41,1502.23,725.41,1505.58,725.41C1508.94,725.41,1512.29,725.41,1515.64,725.41C1518.99,725.41,1522.35,725.41,1525.70,725.41C1529.05,725.41,1532.40,725.41,1535.76,725.41C1539.11,725.41,1542.46,725.41,1545.81,725.41C1549.17,725.41,1552.52,725.41,1555.87,725.41C1559.22,725.41,1562.58,725.41,1565.93,725.41C1569.28,725.41,1572.63,725.41,1575.98,725.41C1579.34,725.41,1582.69,725.41,1586.04,725.41C1589.39,725.41,1592.75,725.41,1596.10,725.41C1599.45,725.41,1602.80,725.41,1606.16,725.41C1609.51,725.41,1612.86,725.41,1616.21,725.41C1619.57,725.41,1622.92,725.41,1626.27,725.41C1629.62,725.41,1632.98,725.41,1636.33,725.41C1639.68,725.41,1643.03,725.41,1646.39,725.41C1649.74,725.41,1653.09,725.41,1656.44,725.41C1659.80,725.41,1663.15,725.41,1666.50,725.41" fill="none" stroke="#f86b6b" stroke-width="2"/>
</svg>
<div class="t" style="right:1335.00px;top:237.10px;font-size:13.9px;line-height:20px;color:#d9e2ec;">3,400</div>
<div class="t" style="right:1335.00px;top:366.20px;font-size:13.9px;line-height:20px;color:#d9e2ec;">2,550</div>
<div class="t" style="right:1335.00px;top:504.00px;font-size:13.9px;line-height:20px;color:#d9e2ec;">1,700</div>
<div class="t" style="right:1335.00px;top:642.00px;font-size:13.9px;line-height:20px;color:#d9e2ec;">850</div>
<div class="t" style="right:1335.00px;top:779.90px;font-size:13.9px;line-height:20px;color:#d9e2ec;">0</div>
<div class="t" style="left:349.29px;width:100px;text-align:center;top:791.80px;font-size:13.9px;line-height:20px;color:#d9e2ec">Dec 2025</div>
<div class="t" style="left:419.69px;width:100px;text-align:center;top:791.80px;font-size:13.9px;line-height:20px;color:#d9e2ec">Jul 2026</div>
<div class="t" style="left:480.03px;width:100px;text-align:center;top:791.80px;font-size:13.9px;line-height:20px;color:#d9e2ec">Jan 2027</div>
<div class="t" style="left:550.43px;width:100px;text-align:center;top:791.80px;font-size:13.9px;line-height:20px;color:#d9e2ec">Aug 2027</div>
<div class="t" style="left:620.83px;width:100px;text-align:center;top:791.80px;font-size:13.9px;line-height:20px;color:#d9e2ec">Mar 2028</div>
<div class="t" style="left:691.23px;width:100px;text-align:center;top:791.80px;font-size:13.9px;line-height:20px;color:#d9e2ec">Oct 2028</div>
<div class="t" style="left:761.63px;width:100px;text-align:center;top:791.80px;font-size:13.9px;line-height:20px;color:#d9e2ec">May 2029</div>
<div class="t" style="left:832.03px;width:100px;text-align:center;top:791.80px;font-size:13.9px;line-height:20px;color:#d9e2ec">Dec 2029</div>
<div class="t" style="left:902.44px;width:100px;text-align:center;top:791.80px;font-size:13.9px;line-height:20px;color:#d9e2ec">Jul 2030</div>
<div class="t" style="left:962.78px;width:100px;text-align:center;top:791.80px;font-size:13.9px;line-height:20px;color:#d9e2ec">Jan 2031</div>
<div class="t" style="left:1023.12px;width:100px;text-align:center;top:791.80px;font-size:13.9px;line-height:20px;color:#d9e2ec">Jul 2031</div>
<div class="t" style="left:1093.52px;width:100px;text-align:center;top:791.80px;font-size:13.9px;line-height:20px;color:#d9e2ec">Feb 2032</div>
<div class="t" style="left:1163.92px;width:100px;text-align:center;top:791.80px;font-size:13.9px;line-height:20px;color:#d9e2ec">Sep 2032</div>
<div class="t" style="left:1234.32px;width:100px;text-align:center;top:791.80px;font-size:13.9px;line-height:20px;color:#d9e2ec">Apr 2033</div>
<div class="t" style="left:1304.73px;width:100px;text-align:center;top:791.80px;font-size:13.9px;line-height:20px;color:#d9e2ec">Nov 2033</div>
<div class="t" style="left:1375.13px;width:100px;text-align:center;top:791.80px;font-size:13.9px;line-height:20px;color:#d9e2ec">Jun 2034</div>
<div class="t" style="left:1445.53px;width:100px;text-align:center;top:791.80px;font-size:13.9px;line-height:20px;color:#d9e2ec">Jan 2035</div>
<div class="t" style="left:1515.93px;width:100px;text-align:center;top:791.80px;font-size:13.9px;line-height:20px;color:#d9e2ec">Aug 2035</div>
<div class="t" style="right:8.00px;top:791.80px;font-size:13.9px;line-height:20px;color:#d9e2ec;">Jun 2036</div>
<div class="t" style="left:278.50px;top:855.10px;font-size:13px;line-height:20px;font-weight:700;letter-spacing:0.1px;color:#eef2f6;">What is the Crossover Point?</div>
<div class="t" style="left:278.50px;top:889.40px;font-size:13.9px;line-height:20px;color:#d9e2ec;letter-spacing:0.033px;">The crossover point is when your monthly investment income (from selected accounts using the safe withdrawal rate) meets or exceeds your total monthly expenses (from selected categories). The chart projects into the</div>
<div class="t" style="left:278.50px;top:908.50px;font-size:13.9px;line-height:20px;color:#d9e2ec;letter-spacing:0.04px;">future using your estimated return until the lines cross.</div>
</body></html>
